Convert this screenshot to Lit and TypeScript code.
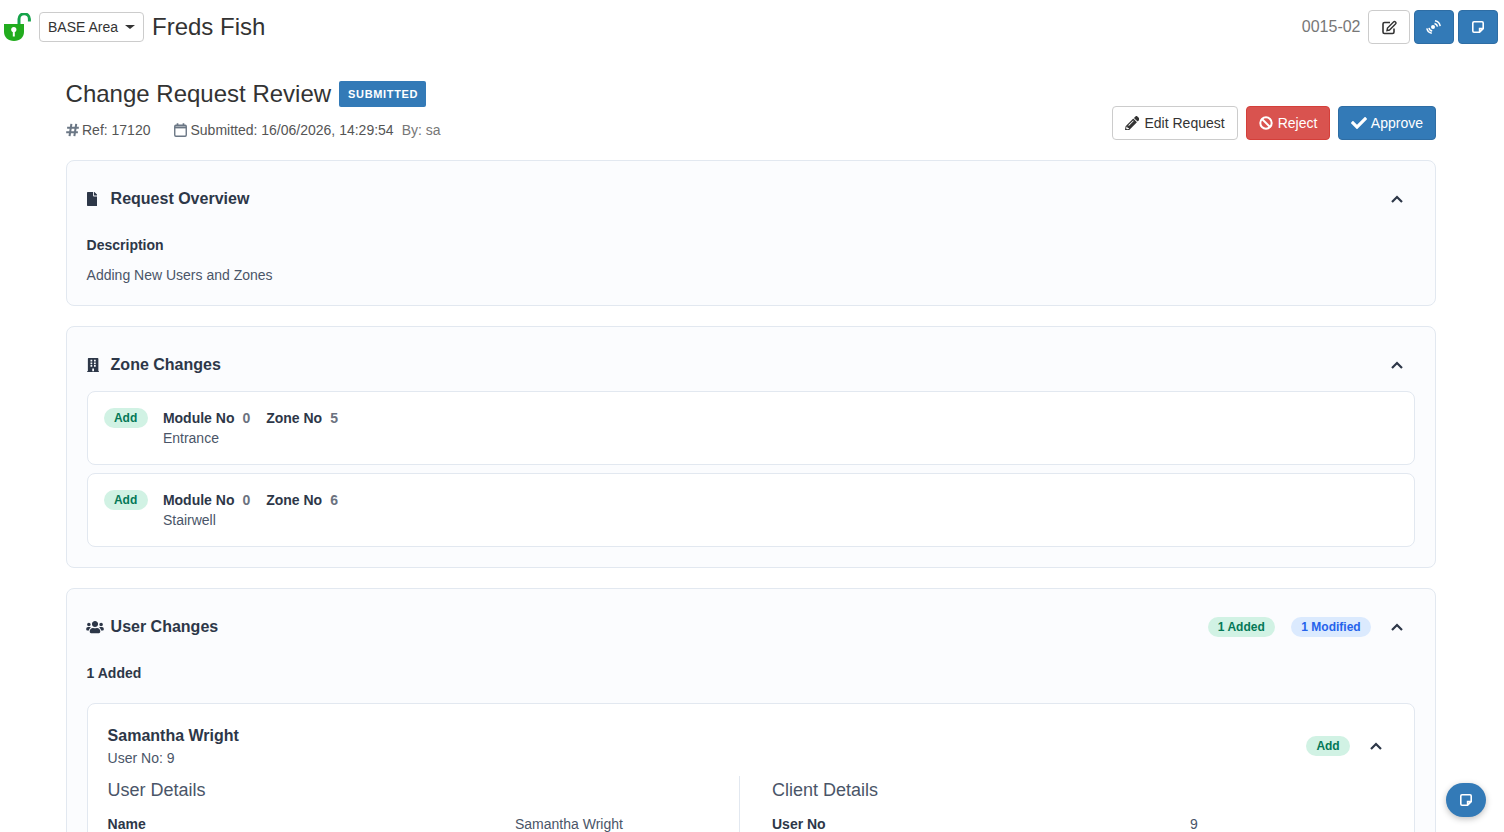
import { LitElement, css, html } from "lit";
import { customElement } from "lit/decorators.js";

const icon = (viewBox: string, d: string, cls = "") =>
  html`<svg class="icon ${cls}" viewBox="${viewBox}" fill="currentColor"><path d="${d}"></path></svg>`;

const PENCIL = "M497.9 142.1l-46.1 46.1c-4.7 4.7-12.3 4.7-17 0l-111-111c-4.7-4.7-4.7-12.3 0-17l46.1-46.1c18.7-18.7 49.1-18.7 67.9 0l60.1 60.1c18.8 18.7 18.8 49.1 0 67.9zM284.2 99.8L21.6 362.4.4 483.9c-2.9 16.4 11.4 30.6 27.8 27.8l121.5-21.3 262.6-262.6c4.7-4.7 4.7-12.3 0-17l-111-111c-4.8-4.7-12.4-4.7-17.1 0zM124.1 339.9c-5.5-5.5-5.5-14.3 0-19.8l154-154c5.5-5.5 14.3-5.5 19.8 0s5.5 14.3 0 19.8l-154 154c-5.5 5.5-14.3 5.5-19.8 0zM88 424h48v36.3l-64.5 11.3-31.1-31.1L51.7 376H88v48z";
const CHECK = "M173.898 439.404l-166.4-166.4c-9.997-9.997-9.997-26.206 0-36.204l36.203-36.204c9.997-9.998 26.207-9.998 36.204 0L192 312.69 432.095 72.596c9.997-9.997 26.207-9.997 36.204 0l36.203 36.204c9.997 9.997 9.997 26.206 0 36.204l-294.4 294.401c-9.998 9.997-26.207 9.997-36.204-.001z";
const FILE = "M224 136V0H24C10.7 0 0 10.7 0 24v464c0 13.3 10.7 24 24 24h336c13.3 0 24-10.7 24-24V160H248c-13.2 0-24-10.8-24-24zm160-14.1v6.1H256V0h6.1c6.4 0 12.5 2.5 17 7l97.9 98c4.5 4.5 7 10.6 7 16.9z";
const BUILDING = "M436 480h-20V24c0-13.255-10.745-24-24-24H56C42.745 0 32 10.745 32 24v456H12c-6.627 0-12 5.373-12 12v20h448v-20c0-6.627-5.373-12-12-12zM128 76c0-6.627 5.373-12 12-12h40c6.627 0 12 5.373 12 12v40c0 6.627-5.373 12-12 12h-40c-6.627 0-12-5.373-12-12V76zm0 96c0-6.627 5.373-12 12-12h40c6.627 0 12 5.373 12 12v40c0 6.627-5.373 12-12 12h-40c-6.627 0-12-5.373-12-12v-40zm52 148h-40c-6.627 0-12-5.373-12-12v-40c0-6.627 5.373-12 12-12h40c6.627 0 12 5.373 12 12v40c0 6.627-5.373 12-12 12zm76 160h-64v-84c0-6.627 5.373-12 12-12h40c6.627 0 12 5.373 12 12v84zm64-172c0 6.627-5.373 12-12 12h-40c-6.627 0-12-5.373-12-12v-40c0-6.627 5.373-12 12-12h40c6.627 0 12 5.373 12 12v40zm0-96c0 6.627-5.373 12-12 12h-40c-6.627 0-12-5.373-12-12v-40c0-6.627 5.373-12 12-12h40c6.627 0 12 5.373 12 12v40zm0-96c0 6.627-5.373 12-12 12h-40c-6.627 0-12-5.373-12-12V76c0-6.627 5.373-12 12-12h40c6.627 0 12 5.373 12 12v40z";
const USERS = "M96 224c35.3 0 64-28.7 64-64s-28.7-64-64-64-64 28.7-64 64 28.7 64 64 64zm448 0c35.3 0 64-28.7 64-64s-28.7-64-64-64-64 28.7-64 64 28.7 64 64 64zm32 32h-64c-17.6 0-33.5 7.1-45.1 18.6 40.3 22.1 68.9 62 75.1 109.4h66c17.7 0 32-14.3 32-32v-32c0-35.3-28.7-64-64-64zm-256 0c61.9 0 112-50.1 112-112S381.9 32 320 32 208 82.1 208 144s50.1 112 112 112zm76.8 32h-8.3c-20.8 10-43.9 16-68.5 16s-47.6-6-68.5-16h-8.3C179.6 288 128 339.6 128 403.2V432c0 26.5 21.5 48 48 48h288c26.5 0 48-21.5 48-48v-28.8c0-63.6-51.6-115.2-115.2-115.2zm-223.7-13.4C161.5 263.1 145.6 256 128 256H64c-35.3 0-64 28.7-64 64v32c0 17.7 14.3 32 32 32h65.9c6.3-47.4 34.9-87.3 75.2-109.4z";

const chevron = html`<svg class="chev" viewBox="0 0 14 14" fill="none" stroke="currentColor" stroke-width="2.2"><path d="M2 10l5-5 5 5"></path></svg>`;
const note = html`<svg class="note" viewBox="0 0 14 14" fill="none" stroke="currentColor" stroke-width="1.6"><path d="M12.2 8.6V3a1.2 1.2 0 0 0-1.2-1.2H3A1.2 1.2 0 0 0 1.8 3v8A1.2 1.2 0 0 0 3 12.2h5.6zM12.2 8.6H8.6v3.6"></path></svg>`;

const lock = html`<svg class="lock" viewBox="0 0 28 28">
  <path d="M15 12V6a5.200 5.200 0 0 1 10.400 0V8.500" fill="none" stroke="#16a34a" stroke-width="3"></path>
  <path d="M0 11h20v8c0 5-4 9-10 9S0 24 0 19z" fill="#22ac1e"></path>
  <circle cx="9.800" cy="16.500" r="2.600" fill="#fff"></circle>
  <path d="M8.800 17h2v6.500h-2z" fill="#fff"></path>
</svg>`;

const editSquare = html`<svg class="hdr-ico" viewBox="0 0 16 16" fill="none" stroke="currentColor">
  <path d="M13 9.500V13a1.500 1.500 0 0 1-1.500 1.500h-8A1.500 1.500 0 0 1 2 13V5a1.500 1.500 0 0 1 1.500-1.500H9" stroke-width="1.600"></path>
  <path d="M6.500 9l-.5 2.500 2.500-.5 6-6a1.300 1.300 0 0 0-2-2z" stroke-width="1.400"></path>
</svg>`;

const broadcast = html`<svg class="hdr-ico" viewBox="0 0 16 16" fill="none" stroke="currentColor" stroke-width="1.500">
  <circle cx="7" cy="8" r="2" fill="currentColor" stroke="none"></circle>
  <path d="M8.500 4.400a4 4 0 0 1 3 3.200M9 1.800a6.500 6.500 0 0 1 5.200 5.400"></path>
  <path d="M3 8.800a4.200 4.200 0 0 0 3.200 3.300M.8 9.300a6.500 6.500 0 0 0 5 4.900"></path>
</svg>`;

const hash = html`<svg class="meta-ico hash" viewBox="0 0 14 14" fill="none" stroke="currentColor" stroke-width="2.200"><path d="M5.800 .5L3.800 13.500M11 .5L9 13.500M1.200 4.600h12.600M.2 9.400h12.600"></path></svg>`;
const calendar = html`<svg class="meta-ico cal" viewBox="0 0 14 14" fill="none" stroke="currentColor" stroke-width="1.500" preserveAspectRatio="none"><rect x=".8" y="2.200" width="12.400" height="11" rx="1.200"></rect><path d="M.8 4.400h12.400" stroke-width="2"></path><path d="M3.800 .2v2.800M10.200 .2v2.800" stroke-width="1.800"></path></svg>`;
const ban = html`<svg class="btn-ico" viewBox="0 0 14 14" fill="none" stroke="currentColor" stroke-width="2"><circle cx="7" cy="7" r="5.700"></circle><path d="M3 3l8 8"></path></svg>`;

@customElement("app-root")
export class AppRoot extends LitElement {
  private zoneItem(zone: number, name: string) {
    return html`<div class="zone">
      <span class="pill green">Add</span>
      <div>
        <div class="zone-line">
          <b>Module No</b><span class="num">0</span>
          <b class="second">Zone No</b><span class="num">${zone}</span>
        </div>
        <div class="zone-name">${name}</div>
      </div>
    </div>`;
  }

  render() {
    return html`
      <header>
        ${lock}
        <button class="btn sm area">BASE Area <span class="caret"></span></button>
        <span class="site">Freds Fish</span>
        <span class="spacer"></span>
        <span class="panel">0015-02</span>
        <button class="btn hbtn wide">${editSquare}</button>
        <button class="btn hbtn primary">${broadcast}</button>
        <button class="btn hbtn primary">${note}</button>
      </header>

      <main>
        <section class="head">
          <div>
            <div class="title-row">
              <h1>Change Request Review</h1>
              <span class="status">SUBMITTED</span>
            </div>
            <div class="meta">
              ${hash}<span class="ref">Ref: 17120</span>
              ${calendar}<span>Submitted: 16/06/2026, 14:29:54</span>
              <span class="by">By: sa</span>
            </div>
          </div>
          <div class="actions">
            <button class="btn edit">${icon("0 0 512 512", PENCIL, "btn-ico")}Edit Request</button>
            <button class="btn danger">${ban}Reject</button>
            <button class="btn primary">${icon("0 0 512 512", CHECK, "btn-ico check")}Approve</button>
          </div>
        </section>

        <section class="card">
          <div class="card-head">
            <span class="slot">${icon("0 0 384 512", FILE, "file")}</span>
            <h2>Request Overview</h2>
            <span class="spacer"></span>
            <span class="tog">${chevron}</span>
          </div>
          <div class="desc-label">Description</div>
          <div class="desc">Adding New Users and Zones</div>
        </section>

        <section class="card">
          <div class="card-head">
            <span class="slot">${icon("0 0 448 512", BUILDING, "file")}</span>
            <h2>Zone Changes</h2>
            <span class="spacer"></span>
            <span class="tog">${chevron}</span>
          </div>
          <div class="zones">
            ${this.zoneItem(5, "Entrance")} ${this.zoneItem(6, "Stairwell")}
          </div>
        </section>

        <section class="card">
          <div class="card-head">
            <span class="slot">${icon("0 0 640 512", USERS, "users")}</span>
            <h2>User Changes</h2>
            <span class="spacer"></span>
            <span class="pill green">1 Added</span>
            <span class="pill blue">1 Modified</span>
            <span class="tog">${chevron}</span>
          </div>
          <div class="group-label">1 Added</div>
          <div class="user">
            <div class="user-head">
              <div>
                <div class="user-name">Samantha Wright</div>
                <div class="user-no">User No: 9</div>
              </div>
              <span class="spacer"></span>
              <span class="pill green">Add</span>
              <span class="tog">${chevron}</span>
            </div>
            <div class="cols">
              <div class="col left">
                <h3>User Details</h3>
                <div class="row"><b>Name</b><span>Samantha Wright</span></div>
              </div>
              <div class="col right">
                <h3>Client Details</h3>
                <div class="row"><b>User No</b><span>9</span></div>
              </div>
            </div>
          </div>
        </section>
      </main>

      <button class="fab">${note}</button>
    `;
  }

  static styles = css`
    :host {
      display: block;
      height: 832px;
      overflow: hidden;
      background: #fff;
      color: #333;
      font-family: "Liberation Sans", Arial, sans-serif;
      font-size: 14px;
      line-height: 20px;
    }
    * { box-sizing: border-box; }
    h1, h2, h3 { margin: 0; font-weight: 400; }
    .spacer { flex: 1; }
    .icon { display: block; }

    header {
      display: flex;
      align-items: center;
      height: 54px;
      padding: 0 6px 0 4px;
    }
    .lock { width: 28px; height: 28px; margin-right: 7px; }
    .btn {
      display: inline-flex;
      align-items: center;
      justify-content: center;
      height: 34px;
      padding: 0 12px;
      border: 1px solid #ccc;
      border-radius: 4px;
      background: #fff;
      color: #333;
      font: inherit;
      white-space: nowrap;
    }
    .btn.primary { background: #337ab7; border-color: #2e6da4; color: #fff; }
    .btn.danger { background: #d9534f; border-color: #d43f3a; color: #fff; padding-right: 11.5px; }
    .btn.sm { height: 30px; padding: 0 8px; }
    .area { width: 105px; margin-right: 8px; justify-content: flex-start; }
    .caret {
      margin-left: 7px;
      border-top: 4px solid #333;
      border-left: 5px solid transparent;
      border-right: 5px solid transparent;
    }
    .site { font-size: 24px; line-height: 30px; }
    .panel { font-size: 16px; color: #777; margin-right: 7.5px; }
    .hbtn { width: 40px; padding: 0; margin-left: 4px; }
    .hbtn.wide { width: 42px; margin-left: 0; }
    .hdr-ico { width: 16px; height: 16px; }
    .note { width: 14px; height: 14px; }

    main { padding: 27px 68px 0 65.6px; }
    .head {
      display: flex;
      justify-content: space-between;
      align-items: flex-end;
      margin-bottom: 20px;
    }
    .title-row { display: flex; align-items: center; gap: 8px; height: 26px; }
    h1 { font-size: 24px; line-height: 26px; color: #333; }
    .status {
      height: 26px;
      padding: 0 8px 0 9px;
      background: #337ab7;
      border-radius: 2px;
      color: #fff;
      font-size: 11px;
      font-weight: 700;
      letter-spacing: 0.66px;
      line-height: 26px;
    }
    .meta { display: flex; align-items: center; margin-top: 13px; color: #555; }
    .meta-ico { color: #6b7785; flex: none; }
    .hash { width: 13px; height: 14px; margin-right: 3.4px; }
    .ref { margin-right: 24px; }
    .cal { width: 13px; height: 14px; margin-right: 3px; }
    .by { margin-left: 8px; color: #777; }
    .actions { display: flex; gap: 8px; }
    .btn-ico { width: 14px; height: 14px; margin-right: 5px; }
    .edit .btn-ico { width: 14.5px; height: 14.5px; }
    .btn-ico.check { width: 16px; height: 16px; margin-right: 4px; }

    .card {
      margin-bottom: 20px;
      padding: 20px;
      background: #fbfcfe;
      border: 1px solid #e2e8f0;
      border-radius: 8px;
    }
    .card-head { display: flex; align-items: center; height: 34px; padding-top: 2px; color: #2d3748; }
    .slot { width: 24px; flex: none; }
    .file { height: 14px; width: auto; }
    .users { width: 18px; height: 14px; margin-left: -1px; }
    h2 { font-size: 16px; font-weight: 700; }
    .tog { display: flex; justify-content: center; width: 12px; margin: 0 12px 0 20px; color: #2d3748; }
    .chev { width: 14px; height: 14px; flex: none; }
    .desc-label { margin-top: 20px; font-weight: 700; color: #2d3748; }
    .desc { margin-top: 10px; color: #4a5568; }

    .pill {
      height: 20px;
      padding: 0 10.3px;
      border-radius: 10px;
      font-size: 12px;
      font-weight: 700;
      line-height: 20px;
      flex: none;
    }
    .green { background: #d1f2e4; color: #047857; }
    .blue { background: #dbeafe; color: #2563eb; margin-left: 16px; }

    .zones { display: flex; flex-direction: column; gap: 8px; margin-top: 10px; }
    .zone {
      display: flex;
      align-items: flex-start;
      gap: 15.4px;
      padding: 16px;
      background: #fff;
      border: 1px solid #e2e8f0;
      border-radius: 8px;
    }
    .zone-line { color: #2d3748; }
    .num { margin-left: 8px; color: #6b7280; font-weight: 700; }
    .second { margin-left: 12px; }
    .zone-name { color: #4a5568; }

    .group-label { margin-top: 20px; font-weight: 700; color: #2d3748; }
    .user {
      margin-top: 20px;
      padding: 20px;
      background: #fff;
      border: 1px solid #e2e8f0;
      border-radius: 8px;
    }
    .user-head { display: flex; align-items: center; height: 44px; }
    .user-name { font-size: 16px; font-weight: 700; line-height: 24px; color: #2d3748; }
    .user-no { color: #4a5568; }
    .cols { display: flex; margin-top: 8px; }
    .col { min-width: 0; }
    .left { width: 631.4px; flex: none; }
    .right { flex: 1; padding-left: 32px; border-left: 1px solid #e2e8f0; }
    h3 { font-size: 18px; line-height: 28px; color: #4a5568; }
    .row { display: grid; margin-top: 10px; color: #4a5568; }
    .left .row { grid-template-columns: 407.4px 1fr; }
    .right .row { grid-template-columns: 418px 1fr; }
    .row b { color: #2d3748; }

    .fab {
      position: fixed;
      right: 18px;
      bottom: 15px;
      display: flex;
      align-items: center;
      justify-content: center;
      width: 40px;
      height: 34px;
      padding: 0;
      border: 0;
      border-radius: 20px;
      background: #337ab7;
      color: #fff;
      box-shadow: 0 2px 6px rgba(0, 0, 0, 0.25);
    }
  `;
}
